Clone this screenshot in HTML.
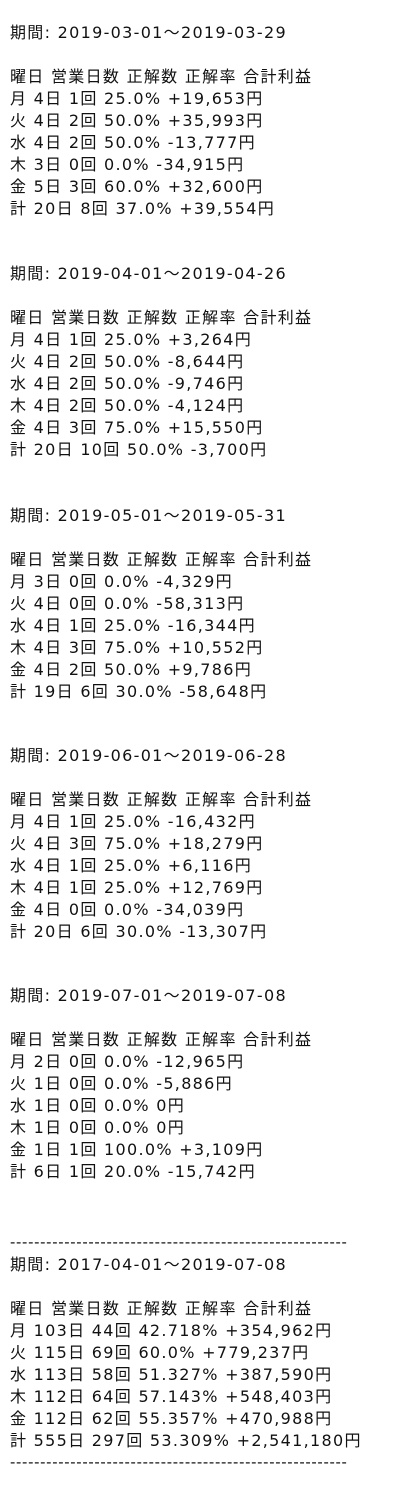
<!DOCTYPE html>
<html><head><meta charset="utf-8"><style>
html,body{margin:0;padding:0;background:#fff;}
body{width:400px;height:1496px;position:relative;overflow:hidden;font-family:"DejaVu Sans","Noto Sans CJK JP",sans-serif;font-size:16px;color:#111;}
.s{position:absolute;left:10px;line-height:22px;white-space:pre;letter-spacing:1.3px;}
.d{letter-spacing:0.7px;font-family:"Liberation Sans",sans-serif;}
</style></head><body>
<div class="s" style="top:22px">期間: 2019-03-01～2019-03-29

曜日 営業日数 正解数 正解率 合計利益
月 4日 1回 25.0% +19,653円
火 4日 2回 50.0% +35,993円
水 4日 2回 50.0% -13,777円
木 3日 0回 0.0% -34,915円
金 5日 3回 60.0% +32,600円
計 20日 8回 37.0% +39,554円</div>
<div class="s" style="top:263px">期間: 2019-04-01～2019-04-26

曜日 営業日数 正解数 正解率 合計利益
月 4日 1回 25.0% +3,264円
火 4日 2回 50.0% -8,644円
水 4日 2回 50.0% -9,746円
木 4日 2回 50.0% -4,124円
金 4日 3回 75.0% +15,550円
計 20日 10回 50.0% -3,700円</div>
<div class="s" style="top:505px">期間: 2019-05-01～2019-05-31

曜日 営業日数 正解数 正解率 合計利益
月 3日 0回 0.0% -4,329円
火 4日 0回 0.0% -58,313円
水 4日 1回 25.0% -16,344円
木 4日 3回 75.0% +10,552円
金 4日 2回 50.0% +9,786円
計 19日 6回 30.0% -58,648円</div>
<div class="s" style="top:745px">期間: 2019-06-01～2019-06-28

曜日 営業日数 正解数 正解率 合計利益
月 4日 1回 25.0% -16,432円
火 4日 3回 75.0% +18,279円
水 4日 1回 25.0% +6,116円
木 4日 1回 25.0% +12,769円
金 4日 0回 0.0% -34,039円
計 20日 6回 30.0% -13,307円</div>
<div class="s" style="top:985px">期間: 2019-07-01～2019-07-08

曜日 営業日数 正解数 正解率 合計利益
月 2日 0回 0.0% -12,965円
火 1日 0回 0.0% -5,886円
水 1日 0回 0.0% 0円
木 1日 0回 0.0% 0円
金 1日 1回 100.0% +3,109円
計 6日 1回 20.0% -15,742円</div>
<div class="s d" style="top:1232px">--------------------------------------------------------</div>
<div class="s" style="top:1254px">期間: 2017-04-01～2019-07-08

曜日 営業日数 正解数 正解率 合計利益
月 103日 44回 42.718% +354,962円
火 115日 69回 60.0% +779,237円
水 113日 58回 51.327% +387,590円
木 112日 64回 57.143% +548,403円
金 112日 62回 55.357% +470,988円
計 555日 297回 53.309% +2,541,180円</div>
<div class="s d" style="top:1452px">--------------------------------------------------------</div>
</body></html>
